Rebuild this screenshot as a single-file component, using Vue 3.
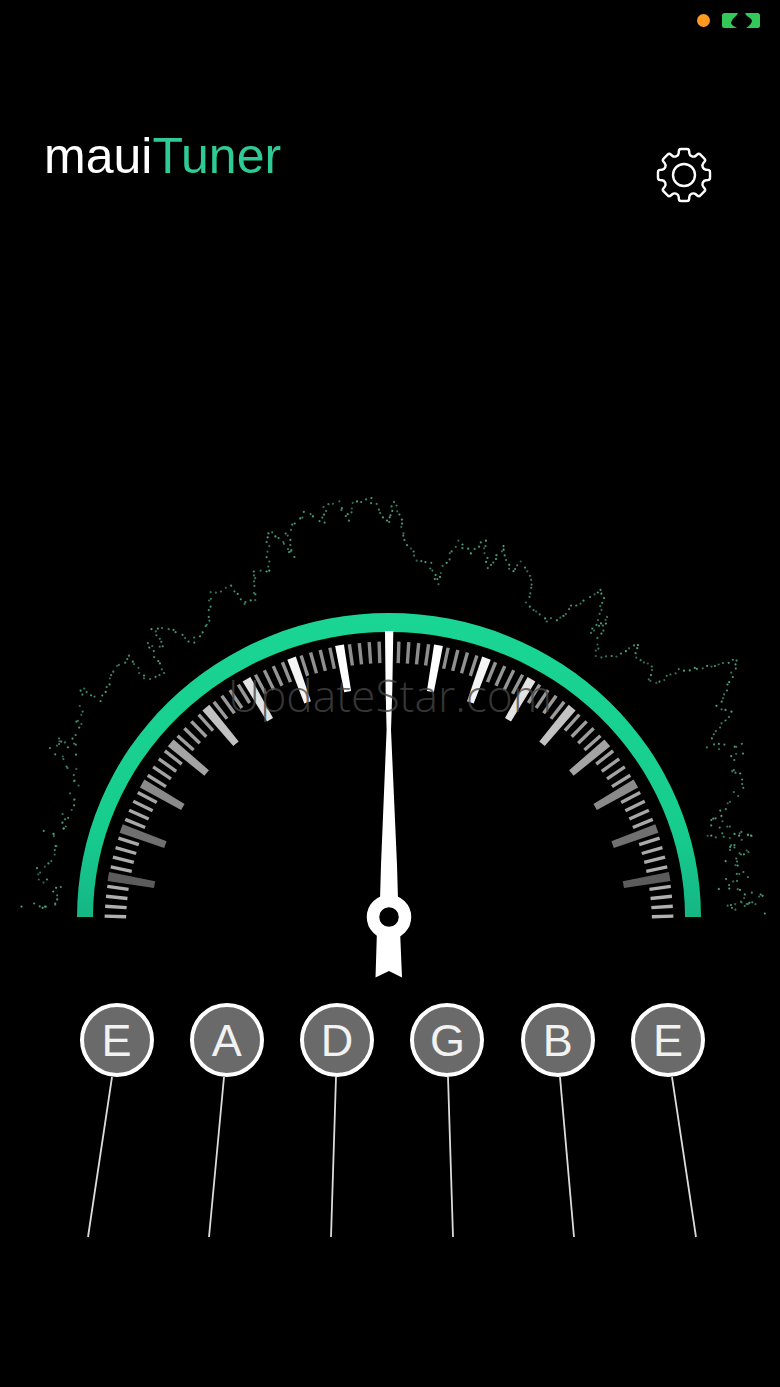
<script setup>
const strings = [
  { note: 'E', x1: 112, x2: 88 },
  { note: 'A', x1: 224, x2: 209 },
  { note: 'D', x1: 336, x2: 331 },
  { note: 'G', x1: 448, x2: 453 },
  { note: 'B', x1: 560, x2: 574 },
  { note: 'E', x1: 672, x2: 696 }
]

// gear outline, 8 teeth with rounded corners
function gearPath() {
  const pts = []
  for (let i = 0; i < 8; i++) {
    const a = (i * Math.PI) / 4 - Math.PI / 2
    const p = (r, d) => [30 + r * Math.cos(a + d), 30 + r * Math.sin(a + d)]
    pts.push(p(20.5, -0.27), p(26.5, -0.19), p(26.5, 0.19), p(20.5, 0.27))
  }
  let out = ''
  pts.forEach((v, i) => {
    const prev = pts[(i + pts.length - 1) % pts.length]
    const next = pts[(i + 1) % pts.length]
    const toward = (from, to) => {
      const len = Math.hypot(to[0] - from[0], to[1] - from[1])
      const k = Math.min(2.2, len / 2) / len
      return (from[0] + (to[0] - from[0]) * k).toFixed(2) + ' ' + (from[1] + (to[1] - from[1]) * k).toFixed(2)
    }
    out += (i === 0 ? 'M' : 'L') + toward(v, prev) + 'Q' + v[0].toFixed(2) + ' ' + v[1].toFixed(2) + ' ' + toward(v, next)
  })
  return out + 'Z'
}
const gear = gearPath()

const cx = 389
const cy = 926
const ticks = []
const grays = ['#5c5c5c', '#707070', '#8a8a8a', '#a4a4a4', '#c2c2c2', '#e2e2e2', '#f4f4f4', '#ffffff']
function point(r, deg) {
  const t = (deg * Math.PI) / 180
  return [cx - r * Math.cos(t), cy - r * Math.sin(t)]
}
function quad(rOut, rIn, wOut, wIn, deg) {
  const t = (deg * Math.PI) / 180
  const nx = Math.sin(t)
  const ny = -Math.cos(t)
  const a = point(rOut, deg)
  const b = point(rIn, deg)
  return [
    [a[0] + (nx * wOut) / 2, a[1] + (ny * wOut) / 2],
    [a[0] - (nx * wOut) / 2, a[1] - (ny * wOut) / 2],
    [b[0] - (nx * wIn) / 2, b[1] - (ny * wIn) / 2],
    [b[0] + (nx * wIn) / 2, b[1] + (ny * wIn) / 2]
  ].map((p) => p[0].toFixed(1) + ',' + p[1].toFixed(1)).join(' ')
}
for (let deg = 2; deg < 180; deg += 2) {
  if (deg === 90) continue
  if (deg % 10 === 0) {
    const i = deg < 90 ? deg / 10 - 1 : (180 - deg) / 10 - 1
    ticks.push({ deg, points: quad(285, 238, 9, 7, deg), fill: grays[i] })
  } else {
    const side = deg < 90 ? deg : 180 - deg
    const g = Math.round(178 - (side / 90) * 40)
    ticks.push({ deg, points: quad(284.5, 263, 3.4, 3.4, deg), fill: `rgb(${g},${g},${g})` })
  }
}

// rough outline of the spectrum, traced by eye
const trace = [
  [26, 909], [37, 906], [55, 908], [58, 887], [37, 875], [47, 867], [57, 850], [47, 833], [68, 830], [63, 818],
  [73, 807], [75, 785], [72, 770], [53, 752], [63, 737], [72, 753], [83, 690], [100, 700], [110, 680], [117, 667],
  [130, 657], [145, 680], [163, 672], [148, 643], [163, 647], [153, 628], [163, 627], [177, 633], [193, 643], [210, 620],
  [210, 593], [220, 590], [230, 587], [243, 603], [255, 600], [255, 570], [270, 572], [268, 557], [268, 532], [280, 537],
  [293, 557], [287, 532], [305, 513], [323, 523], [325, 507], [338, 502], [348, 520], [353, 503], [370, 498], [388, 523],
  [393, 502], [402, 518], [403, 537], [410, 548], [417, 560], [430, 563], [437, 585], [448, 558], [458, 542], [470, 553],
  [485, 540], [487, 568], [503, 547], [512, 572], [522, 563], [532, 580], [527, 603], [547, 620], [560, 618], [572, 607],
  [602, 590], [603, 603], [592, 632], [608, 618], [597, 643], [597, 657], [617, 655], [637, 645], [637, 657], [653, 667],
  [648, 680], [660, 682], [680, 670], [703, 667], [737, 660], [727, 690], [718, 707], [730, 712], [720, 728], [708, 743],
  [718, 748], [738, 743], [740, 753], [728, 768], [743, 780], [743, 788], [733, 800], [708, 822], [727, 825], [712, 837],
  [753, 833], [727, 846], [747, 853], [730, 865], [747, 873], [722, 885], [743, 893], [763, 895], [727, 907], [750, 902],
  [765, 912]
]
let seed = 17
function rnd() {
  seed = (seed * 16807) % 2147483647
  return seed / 2147483647
}
const dots = []
for (let i = 0; i < trace.length - 1; i++) {
  const [x1, y1] = trace[i]
  const [x2, y2] = trace[i + 1]
  const n = Math.max(2, Math.round(Math.hypot(x2 - x1, y2 - y1) / 4.6))
  // the low ends of the curve are noisier than the top
  const spread = y1 > 730 ? 9 : 3.4
  for (let k = 0; k < n; k++) {
    const f = k / n
    dots.push({
      x: (x1 + (x2 - x1) * f + (rnd() - 0.5) * spread).toFixed(1),
      y: (y1 + (y2 - y1) * f + (rnd() - 0.5) * spread).toFixed(1),
      o: (0.6 + rnd() * 0.4).toFixed(2)
    })
  }
}
</script>

<template>
  <main class="page">
    <div class="status">
      <span class="mic-dot"></span>
      <svg class="battery" width="38" height="15" viewBox="0 0 38 15">
        <rect width="38" height="15" rx="2.5" fill="#34c759" />
        <path d="M16 0 L23 0 Q24 2 25 3 Q30 6 30 8 Q29 12 24 15 L15 15 Q9 12 9 9.5 Q10 6 14 3 Q15 2 16 0Z" fill="#000" />
      </svg>
    </div>

    <header class="top">
      <h1 class="logo">maui<span>Tuner</span></h1>
      <button class="settings" type="button" aria-label="Settings">
        <svg width="60" height="60" viewBox="0 0 60 60" fill="none" stroke="#fff" stroke-width="2.4">
          <path :d="gear" />
          <circle cx="30" cy="30" r="11" />
        </svg>
      </button>
    </header>

    <svg class="gauge" width="780" height="500" viewBox="0 490 780 500">
      <defs>
        <linearGradient id="ring" x1="0" y1="613" x2="0" y2="917" gradientUnits="userSpaceOnUse">
          <stop offset="0" stop-color="#1ad594" />
          <stop offset="0.7" stop-color="#17cd8e" />
          <stop offset="1" stop-color="#15b685" />
        </linearGradient>
      </defs>
      <circle v-for="(d, i) in dots" :key="i" :cx="d.x" :cy="d.y" r="1.1" fill="#4fa58c" :opacity="d.o" />
      <path d="M77 917 A312 304 0 0 1 701 917 L685 917 A296 285 0 0 0 93 917 Z" fill="url(#ring)" />
      <polygon v-for="t in ticks" :key="t.deg" :points="t.points" :fill="t.fill" />
      <path d="M385 631 L393.3 631 L392.3 690 L391 730 L397 865 L398 900 L380 900 L381 865 L386.6 730 L385.6 690 Z" fill="#fff" />
      <path d="M377 930 L400 930 L402 977.5 L389 971 L375.5 977.5 Z" fill="#fff" />
      <circle cx="389" cy="917" r="16" fill="none" stroke="#fff" stroke-width="12.5" />
      <text x="228" y="712" class="watermark" textLength="324" lengthAdjust="spacingAndGlyphs">UpdateStar.com</text>
    </svg>

    <div class="notes">
      <button v-for="(s, i) in strings" :key="i" class="note" type="button">{{ s.note }}</button>
    </div>

    <svg class="strings" width="780" height="163" viewBox="0 1077 780 163">
      <line v-for="(s, i) in strings" :key="i" :x1="s.x1" y1="1077" :x2="s.x2" y2="1237" stroke="#dcdcdc" stroke-width="1.8" />
    </svg>
  </main>
</template>

<style scoped>
.page {
  width: 780px;
  height: 1387px;
  background: #000;
  display: flex;
  flex-direction: column;
  overflow: hidden;
  font-family: "Liberation Sans", Arial, sans-serif;
}

.status {
  display: flex;
  justify-content: flex-end;
  align-items: center;
  gap: 12px;
  height: 15px;
  padding: 13px 20px 0 0;
}

.mic-dot {
  width: 13px;
  height: 13px;
  border-radius: 50%;
  background: #ff9a1f;
}

.battery {
  display: block;
}

.top {
  display: flex;
  justify-content: space-between;
  align-items: flex-start;
  height: 90px;
  margin-top: 99px;
  padding: 0 66px 0 44px;
}

.logo {
  margin: 0;
  color: #fff;
  font-size: 50px;
  font-weight: 400;
  line-height: 58px;
}

.logo span {
  color: #2fcb97;
}

.settings {
  display: block;
  width: 60px;
  height: 60px;
  margin-top: 18px;
  padding: 0;
  background: none;
  border: 0;
}

.settings svg,
.gauge,
.strings {
  display: block;
}

.gauge {
  margin-top: 273px;
  flex: none;
}

.watermark {
  font-family: "Open Sans", sans-serif;
  font-size: 44px;
  font-weight: 300;
  fill: rgba(70, 70, 70, 0.78);
}

.notes {
  display: flex;
  gap: 36.3px;
  padding-left: 79.5px;
  margin-top: 13px;
}

.note {
  box-sizing: border-box;
  width: 74px;
  height: 74px;
  padding: 0;
  border: 4px solid #fff;
  border-radius: 50%;
  background: #6a6a6a;
  color: #f2f2f2;
  font-family: "Liberation Sans", Arial, sans-serif;
  font-size: 45px;
  line-height: 1;
}
</style>

<style>
html,
body {
  background: #000;
}
</style>
